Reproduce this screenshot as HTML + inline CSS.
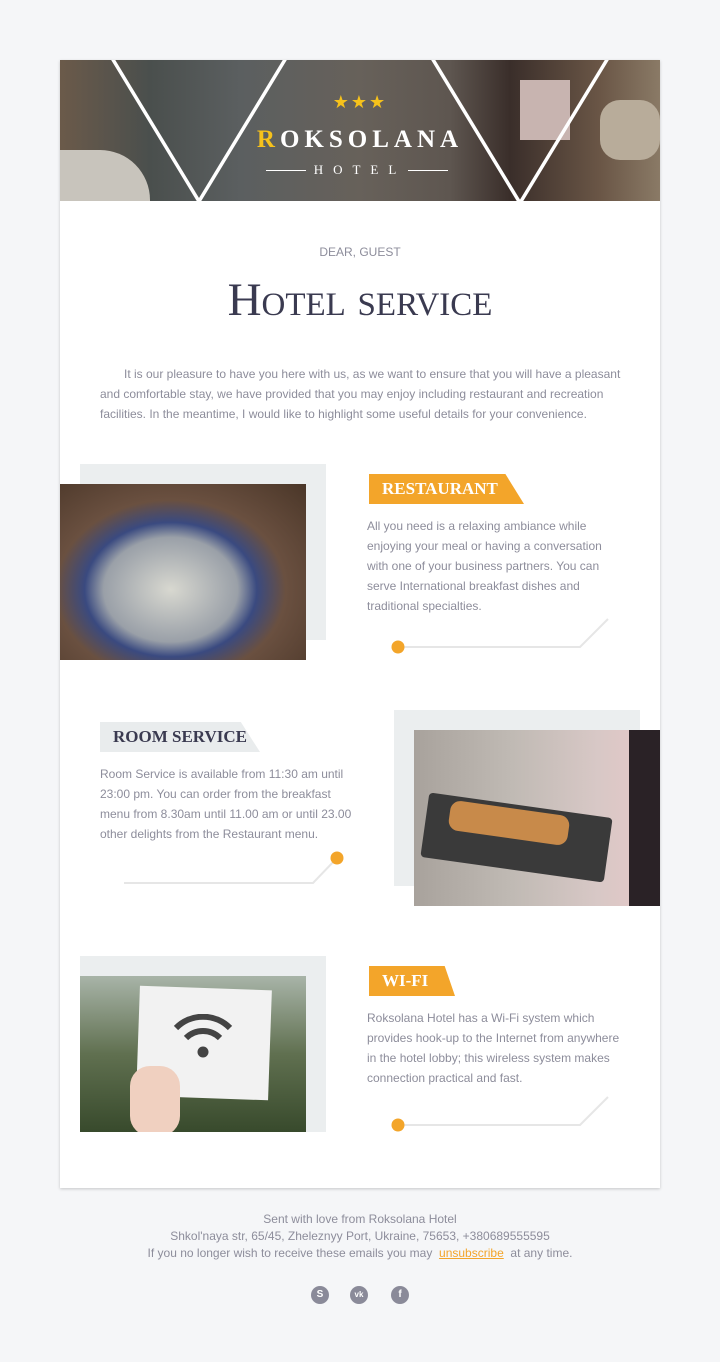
<!DOCTYPE html>
<html><head><meta charset="utf-8"><style>
*{margin:0;padding:0;box-sizing:border-box}
body{width:720px;height:1362px;background:#f5f6f8;font-family:"Liberation Sans",sans-serif;position:relative;overflow:hidden}
.card{position:absolute;left:60px;top:60px;width:600px;height:1128px;background:#fff;box-shadow:0 1px 3px rgba(0,0,0,.2)}
.a{position:absolute}
.txt{position:absolute;font-size:12px;line-height:20px;color:#8d8d9b}
.lab{position:absolute;height:30px;font-family:"Liberation Serif",serif;font-size:17px;line-height:30px;padding-left:13px;clip-path:polygon(0 0,88% 0,100% 100%,0 100%)}
.or{background:#f3a52a;color:#fff}
.gr{background:#e9eced;color:#3a3a50;font-weight:bold}
.or{font-weight:bold}
.foot{position:absolute;left:0;width:720px;text-align:center;font-size:12px;color:#8d8d9b}
.ic{position:absolute;top:1286px;width:18px;height:18px;border-radius:50%;background:#8a8a99;color:#fff;font-size:10px;font-weight:bold;text-align:center;line-height:18px}
</style></head><body>
<div class="card"></div>
<div class="a" style="left:60px;top:60px;width:600px;height:141px;overflow:hidden;background:linear-gradient(90deg,#6b5a4a 0%,#4a4f4d 15%,#5b5f60 30%,#67615a 50%,#5e5650 65%,#3a2e2a 75%,#6a5646 90%,#8a7a66 100%)">
<div class="a" style="left:0;top:90px;width:90px;height:51px;background:#c8c4bc;border-radius:0 50px 0 0"></div>
<div class="a" style="left:460px;top:20px;width:50px;height:60px;background:#c8b4b0"></div>
<div class="a" style="left:540px;top:40px;width:60px;height:60px;background:#b8ac9a;border-radius:20px"></div>
<svg class="a" style="left:0;top:0" width="600" height="141"><g stroke="#fff" stroke-width="3.5"><line x1="52" y1="-2" x2="140" y2="143"/><line x1="226" y1="-2" x2="138" y2="143"/><line x1="372" y1="-2" x2="460" y2="143"/><line x1="548" y1="-2" x2="460" y2="143"/></g></svg>
<div class="a" style="left:0;top:32px;width:600px;text-align:center;color:#f6c21b;font-size:18px;letter-spacing:2px">★★★</div>
<div class="a" style="left:0;top:66px;width:600px;text-align:center;color:#fff;font-family:'Liberation Serif',serif;font-size:25px;letter-spacing:5px;font-weight:bold"><span style="color:#f6c21b">R</span>OKSOLANA</div>
<div class="a" style="left:206px;top:110px;width:40px;height:1px;background:#fff"></div>
<div class="a" style="left:348px;top:110px;width:40px;height:1px;background:#fff"></div>
<div class="a" style="left:0;top:102px;width:600px;text-align:center;color:#fff;font-family:'Liberation Serif',serif;font-size:13px;letter-spacing:10px">HOTEL</div>
</div>
<div class="a" style="left:0;top:245px;width:720px;text-align:center;font-size:12px;color:#8d8d9b">DEAR, GUEST</div>
<div class="a" style="left:0;top:273px;width:720px;text-align:center;font-family:'Liberation Serif',serif;font-size:47px;color:#3a3a50;font-variant:small-caps">Hotel service</div>
<div class="txt" style="left:100px;top:364px;width:522px;text-indent:24px">It is our pleasure to have you here with us, as we want to ensure that you will have a pleasant and comfortable stay, we have provided that you may enjoy including restaurant and recreation facilities. In the meantime, I would like to highlight some useful details for your convenience.</div>

<div class="a" style="left:80px;top:464px;width:246px;height:176px;background:#ebeeef"></div>
<div class="a" style="left:60px;top:484px;width:246px;height:176px;background:radial-gradient(ellipse at 45% 60%,#d8d8d0 0%,#9aa0a8 35%,#3a4a80 45%,#6a5040 60%,#4a3628 100%)"></div>
<div class="lab or" style="left:369px;top:474px;width:155px">RESTAURANT</div>
<div class="txt" style="left:367px;top:516px;width:250px">All you need is a relaxing ambiance while enjoying your meal or having a conversation with one of your business partners. You can serve International breakfast dishes and traditional specialties.</div>
<svg class="a" style="left:380px;top:610px" width="240" height="50"><polyline points="18,37 200,37 228,9" fill="none" stroke="#e6e6e6" stroke-width="2"/><circle cx="18" cy="37" r="6.5" fill="#f3a52a"/></svg>

<div class="lab gr" style="left:100px;top:722px;width:160px">ROOM SERVICE</div>
<div class="txt" style="left:100px;top:764px;width:262px">Room Service is available from 11:30 am until 23:00 pm. You can order from the breakfast menu from 8.30am until 11.00 am or until 23.00 other delights from the Restaurant menu.</div>
<svg class="a" style="left:110px;top:845px" width="240" height="45"><polyline points="14,38 203,38 227,13" fill="none" stroke="#e6e6e6" stroke-width="2"/><circle cx="227" cy="13" r="6.5" fill="#f3a52a"/></svg>
<div class="a" style="left:394px;top:710px;width:246px;height:176px;background:#ebeeef"></div>
<div class="a" style="left:414px;top:730px;width:246px;height:176px;background:linear-gradient(90deg,#a8a29c 0%,#c0bab4 40%,#d8c8c6 75%,#e8c8c8 100%)">
<div class="a" style="left:10px;top:75px;width:185px;height:65px;background:#3a3a3a;transform:rotate(8deg);border-radius:4px"></div>
<div class="a" style="left:35px;top:78px;width:120px;height:30px;background:#c88a4a;border-radius:10px;transform:rotate(8deg)"></div>
<div class="a" style="left:215px;top:0;width:31px;height:176px;background:#2a2226"></div>
</div>

<div class="a" style="left:80px;top:956px;width:246px;height:176px;background:#ebeeef"></div>
<div class="a" style="left:80px;top:976px;width:226px;height:156px;overflow:hidden;background:linear-gradient(180deg,#a8b4a8 0%,#607050 50%,#384a2c 100%)">
<div class="a" style="left:58px;top:12px;width:132px;height:110px;background:#f2f2f2;transform:rotate(2deg)"></div>
<svg class="a" style="left:90px;top:38px" width="70" height="50"><g fill="none" stroke="#444" stroke-width="6"><path d="M6 14 A38 38 0 0 1 60 14"/><path d="M16 24 A24 24 0 0 1 50 24"/></g><circle cx="33" cy="38" r="5.5" fill="#444"/></svg>
<div class="a" style="left:50px;top:90px;width:50px;height:70px;background:#f0d0c0;border-radius:20px"></div>
</div>
<div class="lab or" style="left:369px;top:966px;width:86px">WI-FI</div>
<div class="txt" style="left:367px;top:1008px;width:260px">Roksolana Hotel has a Wi-Fi system which provides hook-up to the Internet from anywhere in the hotel lobby; this wireless system makes connection practical and fast.</div>
<svg class="a" style="left:380px;top:1088px" width="240" height="50"><polyline points="18,37 200,37 228,9" fill="none" stroke="#e6e6e6" stroke-width="2"/><circle cx="18" cy="37" r="6.5" fill="#f3a52a"/></svg>

<div class="foot" style="top:1212px">Sent with love from Roksolana Hotel</div>
<div class="foot" style="top:1229px">Shkol'naya str, 65/45, Zheleznyy Port, Ukraine, 75653, +380689555595</div>
<div class="foot" style="top:1246px">If you no longer wish to receive these emails you may &nbsp;<span style="color:#f3a52a;text-decoration:underline">unsubscribe</span>&nbsp; at any time.</div>
<div class="ic" style="left:311px">S</div>
<div class="ic" style="left:350px;font-size:8px">vk</div>
<div class="ic" style="left:391px">f</div>
</body></html>
